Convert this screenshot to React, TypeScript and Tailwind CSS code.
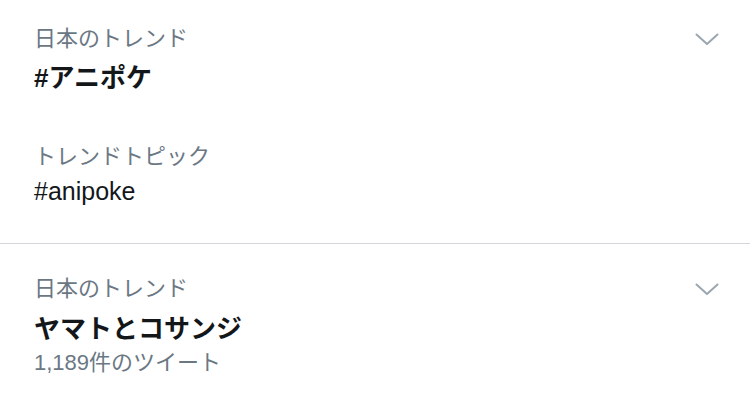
import React from "react";

const font = { fontFamily: '"Liberation Sans", "Noto Sans CJK JP", sans-serif' };

function Chevron() {
  return (
    <svg width="24" height="13" viewBox="0 0 24 13" fill="none" className="shrink-0">
      <path d="M1.5 1.5 L12 11 L22.5 1.5" stroke="#9aa6b0" strokeWidth="2" strokeLinecap="round" strokeLinejoin="round" />
    </svg>
  );
}

export default function App() {
  return (
    <div className="w-[750px] h-[410px] bg-white overflow-hidden" style={font}>
      <div className="pl-[34px] pr-[31px] pt-[22px] pb-[35px]">
        <div className="flex items-center justify-between h-[34px]">
          <span className="text-[22px] leading-[34px] text-[#6b7884]">日本のトレンド</span>
          <Chevron />
        </div>
        <div className="text-[26px] leading-[40px] pt-[2px] h-[40px] font-bold text-[#14171a]">#アニポケ</div>
        <div className="mt-[44px] text-[22px] leading-[34px] text-[#6b7884]">トレンドトピック</div>
        <div className="text-[25px] leading-[34px] text-[#14171a]">#anipoke</div>
      </div>
      <div className="h-px bg-[#d3d6da]" />
      <div className="pl-[34px] pr-[31px] pt-[28px]">
        <div className="flex items-center justify-between h-[34px]">
          <span className="text-[22px] leading-[34px] text-[#6b7884]">日本のトレンド</span>
          <Chevron />
        </div>
        <div className="text-[26px] leading-[42px] pt-[2px] h-[42px] font-bold text-[#14171a]">ヤマトとコサンジ</div>
        <div className="text-[22px] leading-[28px] pt-[1px] text-[#6b7884]">1,189件のツイート</div>
      </div>
    </div>
  );
}
